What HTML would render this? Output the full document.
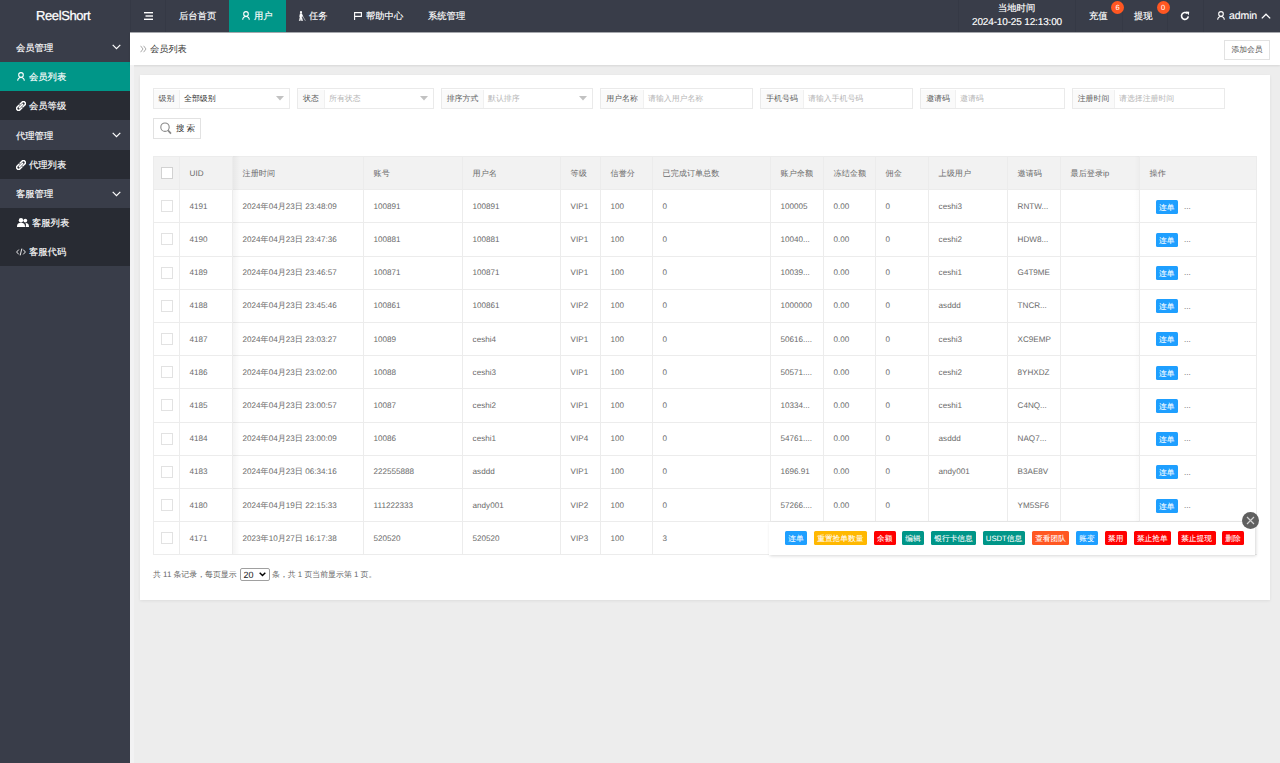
<!DOCTYPE html><html><head><meta charset="utf-8"><style>
*{margin:0;padding:0;box-sizing:border-box}
html,body{width:1280px;height:763px;overflow:hidden}
body{position:relative;background:#ededed;font-family:"Liberation Sans",sans-serif;text-rendering:geometricPrecision;color:#666}
.a{position:absolute;white-space:nowrap}
#hd{left:0;top:0;width:1280px;height:32px;background:#393D49}
#logo{left:36px;top:0;height:32px;line-height:31px;color:#fff;font-size:13px;letter-spacing:-0.4px;-webkit-text-stroke:0.35px rgba(255,255,255,.85)}
.nv{color:#fff;font-size:9.3px;line-height:33px;top:0;-webkit-text-stroke:0.2px rgba(255,255,255,.8)}
#side{left:0;top:32px;width:130px;height:731px;background:#393D49}

.sc{background:#282B33}
.act{background:#009688}
#bc{left:130px;top:32px;width:1150px;height:33px;background:#fff;box-shadow:0 1px 2px rgba(0,0,0,.1)}
#card{left:140px;top:75px;width:1130px;height:525px;background:#fff;box-shadow:0 1px 3px rgba(0,0,0,.07)}
.fi{height:20.5px;top:88px;border:1px solid #eaeaea;background:#fff}
.fl{position:absolute;left:0;top:1px;bottom:0;background:#fafafa;border-right:1px solid #f0f0f0;color:#5a5a5a;font-size:7.9px;line-height:18.5px;text-align:center}
.fv{position:absolute;top:1px;line-height:18.5px;font-size:7.9px;color:#aaa}
.ln{background:#ececec}
.tx{font-size:8.1px;color:#6a6a6a}
.btn{height:14px;line-height:15px;font-size:7.7px;color:#fff;text-align:center;border-radius:1.5px;-webkit-text-stroke:0.1px rgba(255,255,255,.6)}
</style></head><body>
<div class="a" id="hd"></div>
<div class="a" id="logo">ReelShort</div>
<div class="a" style="left:130px;top:0;width:1px;height:32px;background:#353945"></div>
<div class="a" style="left:165px;top:0;width:1px;height:32px;background:#353945"></div>
<svg class="a" style="left:144px;top:12px" width="9" height="8" viewBox="0 0 9 8"><rect x="0" y="0" width="9" height="1.4" fill="#fff"/><rect x="1.5" y="3.3" width="7.5" height="1.4" fill="#fff"/><rect x="0" y="6.6" width="9" height="1.4" fill="#fff"/></svg>
<div class="a nv" style="left:179px">后台首页</div>
<div class="a" style="left:229px;top:0;width:57px;height:32px;background:#009688"></div>
<svg class="a" style="left:242px;top:11px" width="8" height="9" viewBox="0 0 8 9"><circle cx="4" cy="2.9" r="2.3" fill="none" stroke="#fff" stroke-width="1.1"/><path d="M0.7 8.7 C0.9 6.4 2.3 5.5 4 5.5 C5.7 5.5 7.1 6.4 7.3 8.7" fill="none" stroke="#fff" stroke-width="1.1"/></svg>
<div class="a nv" style="left:254px">用户</div>
<svg class="a" style="left:298px;top:11px" width="8" height="10" viewBox="0 0 8 10"><circle cx="3" cy="1.2" r="1.1" fill="#fff"/><path d="M2.2 2.6 L3.8 2.6 L4.6 5.2 L3.9 5.4 L3.7 4.6 L3.8 6.4 L4.6 9.8 L3.6 9.8 L2.9 7 L2.2 9.8 L1.3 9.8 L2 6.2 L1.6 5.4 Z M4.2 4.2 L7.4 9.8" fill="#fff" stroke="#fff" stroke-width="0.5"/></svg>
<div class="a nv" style="left:309px">任务</div>
<svg class="a" style="left:354px;top:12px" width="8" height="8" viewBox="0 0 8 8"><path d="M0.6 0 L0.6 8 M0.6 0.6 L7.4 0.6 L7.4 4.4 L0.6 4.4" fill="none" stroke="#fff" stroke-width="1.1"/></svg>
<div class="a nv" style="left:366px">帮助中心</div>
<div class="a nv" style="left:428px">系统管理</div>
<div class="a" style="left:958px;top:0;width:1px;height:32px;background:#353945"></div>
<div class="a" style="left:1075px;top:0;width:1px;height:32px;background:#353945"></div>
<div class="a" style="left:1122px;top:0;width:1px;height:32px;background:#353945"></div>
<div class="a" style="left:1167px;top:0;width:1px;height:32px;background:#353945"></div>
<div class="a" style="left:1203px;top:0;width:1px;height:32px;background:#353945"></div>
<div class="a nv" style="left:998px;top:0;line-height:16px;color:#fff">当地时间</div>
<div class="a nv" style="left:972px;top:15px;line-height:16px;font-size:10px;letter-spacing:-0.15px">2024-10-25 12:13:00</div>
<div class="a nv" style="left:1089px;top:0">充值</div>
<div class="a" style="left:1111px;top:1px;width:13px;height:12.5px;border-radius:7px;background:#FF5722;color:#fff;font-size:7.5px;line-height:13px;text-align:center">6</div>
<div class="a nv" style="left:1134px;top:0">提现</div>
<div class="a" style="left:1156.5px;top:1px;width:13px;height:12.5px;border-radius:7px;background:#FF5722;color:#fff;font-size:7.5px;line-height:13px;text-align:center">0</div>
<svg class="a" style="left:1180px;top:11px" width="10" height="10" viewBox="0 0 10 10"><path d="M8.3 5.4 A3.4 3.4 0 1 1 7.2 2.4" fill="none" stroke="#fff" stroke-width="1.6"/><path d="M5.6 0.6 L9.2 0.8 L8.8 4.2 Z" fill="#fff"/></svg>
<svg class="a" style="left:1217px;top:11px" width="8" height="9" viewBox="0 0 8 9"><circle cx="4" cy="2.9" r="2.3" fill="none" stroke="#fff" stroke-width="1.1"/><path d="M0.7 8.7 C0.9 6.4 2.3 5.5 4 5.5 C5.7 5.5 7.1 6.4 7.3 8.7" fill="none" stroke="#fff" stroke-width="1.1"/></svg>
<div class="a nv" style="left:1229px;font-size:10.5px;letter-spacing:-0.1px">admin</div>
<svg class="a" style="left:1261px;top:13px" width="10" height="6" viewBox="0 0 10 6"><path d="M0.8 5.4 L5 1.2 L9.2 5.4" fill="none" stroke="#fff" stroke-width="1.3"/></svg>
<div class="a" id="side"></div>
<div class="a " style="left:0;top:32px;width:130px;height:30px"></div>
<div class="a nv" style="left:16px;top:33px;line-height:30px">会员管理</div>
<svg class="a" style="left:112px;top:44.0px" width="9" height="6" viewBox="0 0 9 6"><path d="M0.7 0.8 L4.5 4.6 L8.3 0.8" fill="none" stroke="#fff" stroke-width="1.2"/></svg>
<div class="a act" style="left:0;top:62px;width:130px;height:29px"></div>
<div class="a nv" style="left:29px;top:63px;line-height:29px">会员列表</div>
<div class="a sc" style="left:0;top:91px;width:130px;height:29px"></div>
<div class="a nv" style="left:29px;top:92px;line-height:29px">会员等级</div>
<div class="a " style="left:0;top:120px;width:130px;height:30px"></div>
<div class="a nv" style="left:16px;top:121px;line-height:30px">代理管理</div>
<svg class="a" style="left:112px;top:132.0px" width="9" height="6" viewBox="0 0 9 6"><path d="M0.7 0.8 L4.5 4.6 L8.3 0.8" fill="none" stroke="#fff" stroke-width="1.2"/></svg>
<div class="a sc" style="left:0;top:150px;width:130px;height:29px"></div>
<div class="a nv" style="left:29px;top:151px;line-height:29px">代理列表</div>
<div class="a " style="left:0;top:179px;width:130px;height:29.30000000000001px"></div>
<div class="a nv" style="left:16px;top:180px;line-height:29.30000000000001px">客服管理</div>
<svg class="a" style="left:112px;top:190.65px" width="9" height="6" viewBox="0 0 9 6"><path d="M0.7 0.8 L4.5 4.6 L8.3 0.8" fill="none" stroke="#fff" stroke-width="1.2"/></svg>
<div class="a sc" style="left:0;top:208.3px;width:130px;height:28.69999999999999px"></div>
<div class="a nv" style="left:32px;top:209.3px;line-height:28.69999999999999px">客服列表</div>
<div class="a sc" style="left:0;top:237px;width:130px;height:29px"></div>
<div class="a nv" style="left:29px;top:238px;line-height:29px">客服代码</div>
<svg class="a" style="left:17px;top:72px" width="8" height="9" viewBox="0 0 8 9"><circle cx="4" cy="2.9" r="2.3" fill="none" stroke="#fff" stroke-width="1.1"/><path d="M0.7 8.7 C0.9 6.4 2.3 5.5 4 5.5 C5.7 5.5 7.1 6.4 7.3 8.7" fill="none" stroke="#fff" stroke-width="1.1"/></svg>
<svg class="a" style="left:16px;top:101px" width="10" height="10" viewBox="0 0 10 10"><path d="M4.2 3 L6 1.2 A1.6 1.6 0 0 1 8.8 4 L7 5.8 M5.8 7 L4 8.8 A1.6 1.6 0 0 1 1.2 6 L3 4.2 M3.4 6.6 L6.6 3.4" fill="none" stroke="#fff" stroke-width="1.5" stroke-linecap="round"/></svg>
<svg class="a" style="left:16px;top:160px" width="10" height="10" viewBox="0 0 10 10"><path d="M4.2 3 L6 1.2 A1.6 1.6 0 0 1 8.8 4 L7 5.8 M5.8 7 L4 8.8 A1.6 1.6 0 0 1 1.2 6 L3 4.2 M3.4 6.6 L6.6 3.4" fill="none" stroke="#fff" stroke-width="1.5" stroke-linecap="round"/></svg>
<svg class="a" style="left:17px;top:218px" width="12" height="9" viewBox="0 0 12 9"><circle cx="4" cy="2.3" r="2.2" fill="#fff"/><path d="M0 9 C0 5.5 1.8 4.8 4 4.8 C6.2 4.8 8 5.5 8 9 Z" fill="#fff"/><circle cx="8.3" cy="2.6" r="1.9" fill="#fff"/><path d="M8.6 9 L12 9 C12 5.8 10.5 5 8.4 5 C9.2 6 9 7.5 8.6 9Z" fill="#fff"/></svg>
<svg class="a" style="left:16px;top:248px" width="10" height="8" viewBox="0 0 10 8"><path d="M2.8 1.6 L0.6 4 L2.8 6.4 M7.2 1.6 L9.4 4 L7.2 6.4 M5.8 0.6 L4.2 7.4" fill="none" stroke="#fff" stroke-width="0.9"/></svg>
<div class="a" id="bc"></div>
<div class="a" style="left:130px;top:65px;width:4px;height:698px;background:#f2f2f3"></div>
<div class="a" style="left:0;top:32px;width:1280px;height:1px;background:rgba(57,61,73,.45)"></div>
<svg class="a" style="left:140px;top:45px" width="7" height="8" viewBox="0 0 7 8"><path d="M0.6 0.8 L3 4 L0.6 7.2 M3.6 0.8 L6 4 L3.6 7.2" fill="none" stroke="#aaa" stroke-width="1"/></svg>
<div class="a tx" style="left:150px;top:41px;line-height:16px;color:#333;font-size:9.2px">会员列表</div>
<div class="a" style="left:1224px;top:39.5px;width:46px;height:20px;border:1px solid #e2e2e2;background:#fff;color:#555;font-size:7.8px;line-height:18px;text-align:center">添加会员</div>
<div class="a" id="card"></div>
<div class="a fi" style="left:153px;width:137px"><div class="fl" style="width:26px">级别</div><div class="fv" style="left:30px;color:#333">全部级别</div>
<svg style="position:absolute;left:122px;top:7px" width="8" height="5" viewBox="0 0 8 5"><path d="M0 0 L8 0 L4 4.5Z" fill="#c2c2c2"/></svg>
</div>
<div class="a fi" style="left:297px;width:137px"><div class="fl" style="width:27px">状态</div><div class="fv" style="left:31px;color:#b5b5b5">所有状态</div>
<svg style="position:absolute;left:122px;top:7px" width="8" height="5" viewBox="0 0 8 5"><path d="M0 0 L8 0 L4 4.5Z" fill="#c2c2c2"/></svg>
</div>
<div class="a fi" style="left:441px;width:152px"><div class="fl" style="width:42px">排序方式</div><div class="fv" style="left:46px;color:#b5b5b5">默认排序</div>
<svg style="position:absolute;left:137px;top:7px" width="8" height="5" viewBox="0 0 8 5"><path d="M0 0 L8 0 L4 4.5Z" fill="#c2c2c2"/></svg>
</div>
<div class="a fi" style="left:600px;width:153px"><div class="fl" style="width:43px">用户名称</div><div class="fv" style="left:47px;color:#b5b5b5">请输入用户名称</div>
</div>
<div class="a fi" style="left:760px;width:153px"><div class="fl" style="width:43px">手机号码</div><div class="fv" style="left:47px;color:#b5b5b5">请输入手机号码</div>
</div>
<div class="a fi" style="left:920px;width:145px"><div class="fl" style="width:35px">邀请码</div><div class="fv" style="left:39px;color:#b5b5b5">邀请码</div>
</div>
<div class="a fi" style="left:1072px;width:153px"><div class="fl" style="width:42px">注册时间</div><div class="fv" style="left:46px;color:#b5b5b5">请选择注册时间</div>
</div>
<div class="a" style="left:153px;top:118px;width:48px;height:21px;border:1px solid #e2e2e2;background:#fff"></div>
<svg class="a" style="left:160px;top:122px" width="12" height="13" viewBox="0 0 12 13"><circle cx="5" cy="5.2" r="4.2" fill="none" stroke="#888" stroke-width="1.1"/><path d="M8 8.4 L11 11.6" stroke="#888" stroke-width="1.6"/></svg>
<div class="a tx" style="left:176px;top:120px;line-height:17px;color:#333;font-size:8.5px;letter-spacing:2px">搜索</div>
<div class="a" style="left:153px;top:156px;width:1103px;height:33.150000000000006px;background:#f2f2f2"></div>
<div class="a ln" style="left:153px;top:156px;width:1104px;height:1px"></div>
<div class="a ln" style="left:153px;top:189.15px;width:1104px;height:1px"></div>
<div class="a ln" style="left:153px;top:222.36px;width:1104px;height:1px"></div>
<div class="a ln" style="left:153px;top:255.57px;width:1104px;height:1px"></div>
<div class="a ln" style="left:153px;top:288.78px;width:1104px;height:1px"></div>
<div class="a ln" style="left:153px;top:321.99px;width:1104px;height:1px"></div>
<div class="a ln" style="left:153px;top:355.20000000000005px;width:1104px;height:1px"></div>
<div class="a ln" style="left:153px;top:388.40999999999997px;width:1104px;height:1px"></div>
<div class="a ln" style="left:153px;top:421.62px;width:1104px;height:1px"></div>
<div class="a ln" style="left:153px;top:454.83000000000004px;width:1104px;height:1px"></div>
<div class="a ln" style="left:153px;top:488.03999999999996px;width:1104px;height:1px"></div>
<div class="a ln" style="left:153px;top:521.25px;width:1104px;height:1px"></div>
<div class="a ln" style="left:153px;top:554.46px;width:1104px;height:1px"></div>
<div class="a ln" style="left:153px;top:156px;width:1px;height:398.46000000000004px"></div>
<div class="a ln" style="left:179px;top:156px;width:1px;height:398.46000000000004px"></div>
<div class="a ln" style="left:232px;top:156px;width:1px;height:398.46000000000004px"></div>
<div class="a ln" style="left:363px;top:156px;width:1px;height:398.46000000000004px"></div>
<div class="a ln" style="left:462px;top:156px;width:1px;height:398.46000000000004px"></div>
<div class="a ln" style="left:560px;top:156px;width:1px;height:398.46000000000004px"></div>
<div class="a ln" style="left:600px;top:156px;width:1px;height:398.46000000000004px"></div>
<div class="a ln" style="left:652px;top:156px;width:1px;height:398.46000000000004px"></div>
<div class="a ln" style="left:770px;top:156px;width:1px;height:398.46000000000004px"></div>
<div class="a ln" style="left:823px;top:156px;width:1px;height:398.46000000000004px"></div>
<div class="a ln" style="left:875px;top:156px;width:1px;height:398.46000000000004px"></div>
<div class="a ln" style="left:928px;top:156px;width:1px;height:398.46000000000004px"></div>
<div class="a ln" style="left:1007px;top:156px;width:1px;height:398.46000000000004px"></div>
<div class="a ln" style="left:1060px;top:156px;width:1px;height:398.46000000000004px"></div>
<div class="a ln" style="left:1139px;top:156px;width:1px;height:398.46000000000004px"></div>
<div class="a ln" style="left:1256px;top:156px;width:1px;height:365.4px"></div>
<div class="a" style="left:233px;top:156px;width:7px;height:398.46000000000004px;background:linear-gradient(90deg,rgba(0,0,0,.045),rgba(0,0,0,0))"></div>
<div class="a" style="left:1134px;top:156px;width:5px;height:398.46000000000004px;background:linear-gradient(270deg,rgba(0,0,0,.02),rgba(0,0,0,0))"></div>
<div class="a tx" style="left:189.6px;top:157px;line-height:33.150000000000006px">UID</div>
<div class="a tx" style="left:242.6px;top:157px;line-height:33.150000000000006px">注册时间</div>
<div class="a tx" style="left:373.6px;top:157px;line-height:33.150000000000006px">账号</div>
<div class="a tx" style="left:472.6px;top:157px;line-height:33.150000000000006px">用户名</div>
<div class="a tx" style="left:570.6px;top:157px;line-height:33.150000000000006px">等级</div>
<div class="a tx" style="left:610.6px;top:157px;line-height:33.150000000000006px">信誉分</div>
<div class="a tx" style="left:662.6px;top:157px;line-height:33.150000000000006px">已完成订单总数</div>
<div class="a tx" style="left:780.6px;top:157px;line-height:33.150000000000006px">账户余额</div>
<div class="a tx" style="left:833.6px;top:157px;line-height:33.150000000000006px">冻结金额</div>
<div class="a tx" style="left:885.6px;top:157px;line-height:33.150000000000006px">佣金</div>
<div class="a tx" style="left:938.6px;top:157px;line-height:33.150000000000006px">上级用户</div>
<div class="a tx" style="left:1017.6px;top:157px;line-height:33.150000000000006px">邀请码</div>
<div class="a tx" style="left:1070.6px;top:157px;line-height:33.150000000000006px">最后登录ip</div>
<div class="a tx" style="left:1149.6px;top:157px;line-height:33.150000000000006px">操作</div>
<div class="a" style="left:161px;top:167px;width:12px;height:12px;border:1px solid #d2d2d2;background:#fff"></div>
<div class="a" style="left:161px;top:200.15px;width:12px;height:12px;border:1px solid #e2e2e2;background:#fff"></div>
<div class="a tx" style="left:189.6px;top:189.75px;line-height:33.21px;">4191</div>
<div class="a tx" style="left:242.6px;top:189.75px;line-height:33.21px;">2024年04月23日 23:48:09</div>
<div class="a tx" style="left:373.6px;top:189.75px;line-height:33.21px;">100891</div>
<div class="a tx" style="left:472.6px;top:189.75px;line-height:33.21px;">100891</div>
<div class="a tx" style="left:570.6px;top:189.75px;line-height:33.21px;">VIP1</div>
<div class="a tx" style="left:610.6px;top:189.75px;line-height:33.21px;">100</div>
<div class="a tx" style="left:662.6px;top:189.75px;line-height:33.21px;">0</div>
<div class="a tx" style="left:780.6px;top:189.75px;line-height:33.21px;">100005</div>
<div class="a tx" style="left:833.6px;top:189.75px;line-height:33.21px;">0.00</div>
<div class="a tx" style="left:885.6px;top:189.75px;line-height:33.21px;">0</div>
<div class="a tx" style="left:938.6px;top:189.75px;line-height:33.21px;">ceshi3</div>
<div class="a tx" style="left:1017.6px;top:189.75px;line-height:33.21px;">RNTW...</div>
<div class="a btn" style="left:1155.5px;top:199.65px;width:22.5px;background:#1E9FFF">连单</div>
<div class="a tx" style="left:1184px;top:190.95000000000002px;line-height:31.21px;font-size:8px">...</div>
<div class="a" style="left:161px;top:233.36px;width:12px;height:12px;border:1px solid #e2e2e2;background:#fff"></div>
<div class="a tx" style="left:189.6px;top:222.96px;line-height:33.21px;">4190</div>
<div class="a tx" style="left:242.6px;top:222.96px;line-height:33.21px;">2024年04月23日 23:47:36</div>
<div class="a tx" style="left:373.6px;top:222.96px;line-height:33.21px;">100881</div>
<div class="a tx" style="left:472.6px;top:222.96px;line-height:33.21px;">100881</div>
<div class="a tx" style="left:570.6px;top:222.96px;line-height:33.21px;">VIP1</div>
<div class="a tx" style="left:610.6px;top:222.96px;line-height:33.21px;">100</div>
<div class="a tx" style="left:662.6px;top:222.96px;line-height:33.21px;">0</div>
<div class="a tx" style="left:780.6px;top:222.96px;line-height:33.21px;">10040...</div>
<div class="a tx" style="left:833.6px;top:222.96px;line-height:33.21px;">0.00</div>
<div class="a tx" style="left:885.6px;top:222.96px;line-height:33.21px;">0</div>
<div class="a tx" style="left:938.6px;top:222.96px;line-height:33.21px;">ceshi2</div>
<div class="a tx" style="left:1017.6px;top:222.96px;line-height:33.21px;">HDW8...</div>
<div class="a btn" style="left:1155.5px;top:232.86px;width:22.5px;background:#1E9FFF">连单</div>
<div class="a tx" style="left:1184px;top:224.16000000000003px;line-height:31.21px;font-size:8px">...</div>
<div class="a" style="left:161px;top:266.57px;width:12px;height:12px;border:1px solid #e2e2e2;background:#fff"></div>
<div class="a tx" style="left:189.6px;top:256.17px;line-height:33.21px;">4189</div>
<div class="a tx" style="left:242.6px;top:256.17px;line-height:33.21px;">2024年04月23日 23:46:57</div>
<div class="a tx" style="left:373.6px;top:256.17px;line-height:33.21px;">100871</div>
<div class="a tx" style="left:472.6px;top:256.17px;line-height:33.21px;">100871</div>
<div class="a tx" style="left:570.6px;top:256.17px;line-height:33.21px;">VIP1</div>
<div class="a tx" style="left:610.6px;top:256.17px;line-height:33.21px;">100</div>
<div class="a tx" style="left:662.6px;top:256.17px;line-height:33.21px;">0</div>
<div class="a tx" style="left:780.6px;top:256.17px;line-height:33.21px;">10039...</div>
<div class="a tx" style="left:833.6px;top:256.17px;line-height:33.21px;">0.00</div>
<div class="a tx" style="left:885.6px;top:256.17px;line-height:33.21px;">0</div>
<div class="a tx" style="left:938.6px;top:256.17px;line-height:33.21px;">ceshi1</div>
<div class="a tx" style="left:1017.6px;top:256.17px;line-height:33.21px;">G4T9ME</div>
<div class="a btn" style="left:1155.5px;top:266.07px;width:22.5px;background:#1E9FFF">连单</div>
<div class="a tx" style="left:1184px;top:257.37px;line-height:31.21px;font-size:8px">...</div>
<div class="a" style="left:161px;top:299.78px;width:12px;height:12px;border:1px solid #e2e2e2;background:#fff"></div>
<div class="a tx" style="left:189.6px;top:289.38px;line-height:33.21px;">4188</div>
<div class="a tx" style="left:242.6px;top:289.38px;line-height:33.21px;">2024年04月23日 23:45:46</div>
<div class="a tx" style="left:373.6px;top:289.38px;line-height:33.21px;">100861</div>
<div class="a tx" style="left:472.6px;top:289.38px;line-height:33.21px;">100861</div>
<div class="a tx" style="left:570.6px;top:289.38px;line-height:33.21px;">VIP2</div>
<div class="a tx" style="left:610.6px;top:289.38px;line-height:33.21px;">100</div>
<div class="a tx" style="left:662.6px;top:289.38px;line-height:33.21px;">0</div>
<div class="a tx" style="left:780.6px;top:289.38px;line-height:33.21px;">1000000</div>
<div class="a tx" style="left:833.6px;top:289.38px;line-height:33.21px;">0.00</div>
<div class="a tx" style="left:885.6px;top:289.38px;line-height:33.21px;">0</div>
<div class="a tx" style="left:938.6px;top:289.38px;line-height:33.21px;">asddd</div>
<div class="a tx" style="left:1017.6px;top:289.38px;line-height:33.21px;">TNCR...</div>
<div class="a btn" style="left:1155.5px;top:299.28px;width:22.5px;background:#1E9FFF">连单</div>
<div class="a tx" style="left:1184px;top:290.58px;line-height:31.21px;font-size:8px">...</div>
<div class="a" style="left:161px;top:332.99px;width:12px;height:12px;border:1px solid #e2e2e2;background:#fff"></div>
<div class="a tx" style="left:189.6px;top:322.59000000000003px;line-height:33.21px;">4187</div>
<div class="a tx" style="left:242.6px;top:322.59000000000003px;line-height:33.21px;">2024年04月23日 23:03:27</div>
<div class="a tx" style="left:373.6px;top:322.59000000000003px;line-height:33.21px;">10089</div>
<div class="a tx" style="left:472.6px;top:322.59000000000003px;line-height:33.21px;">ceshi4</div>
<div class="a tx" style="left:570.6px;top:322.59000000000003px;line-height:33.21px;">VIP1</div>
<div class="a tx" style="left:610.6px;top:322.59000000000003px;line-height:33.21px;">100</div>
<div class="a tx" style="left:662.6px;top:322.59000000000003px;line-height:33.21px;">0</div>
<div class="a tx" style="left:780.6px;top:322.59000000000003px;line-height:33.21px;">50616....</div>
<div class="a tx" style="left:833.6px;top:322.59000000000003px;line-height:33.21px;">0.00</div>
<div class="a tx" style="left:885.6px;top:322.59000000000003px;line-height:33.21px;">0</div>
<div class="a tx" style="left:938.6px;top:322.59000000000003px;line-height:33.21px;">ceshi3</div>
<div class="a tx" style="left:1017.6px;top:322.59000000000003px;line-height:33.21px;">XC9EMP</div>
<div class="a btn" style="left:1155.5px;top:332.49px;width:22.5px;background:#1E9FFF">连单</div>
<div class="a tx" style="left:1184px;top:323.79px;line-height:31.21px;font-size:8px">...</div>
<div class="a" style="left:161px;top:366.20000000000005px;width:12px;height:12px;border:1px solid #e2e2e2;background:#fff"></div>
<div class="a tx" style="left:189.6px;top:355.80000000000007px;line-height:33.21px;">4186</div>
<div class="a tx" style="left:242.6px;top:355.80000000000007px;line-height:33.21px;">2024年04月23日 23:02:00</div>
<div class="a tx" style="left:373.6px;top:355.80000000000007px;line-height:33.21px;">10088</div>
<div class="a tx" style="left:472.6px;top:355.80000000000007px;line-height:33.21px;">ceshi3</div>
<div class="a tx" style="left:570.6px;top:355.80000000000007px;line-height:33.21px;">VIP1</div>
<div class="a tx" style="left:610.6px;top:355.80000000000007px;line-height:33.21px;">100</div>
<div class="a tx" style="left:662.6px;top:355.80000000000007px;line-height:33.21px;">0</div>
<div class="a tx" style="left:780.6px;top:355.80000000000007px;line-height:33.21px;">50571....</div>
<div class="a tx" style="left:833.6px;top:355.80000000000007px;line-height:33.21px;">0.00</div>
<div class="a tx" style="left:885.6px;top:355.80000000000007px;line-height:33.21px;">0</div>
<div class="a tx" style="left:938.6px;top:355.80000000000007px;line-height:33.21px;">ceshi2</div>
<div class="a tx" style="left:1017.6px;top:355.80000000000007px;line-height:33.21px;">8YHXDZ</div>
<div class="a btn" style="left:1155.5px;top:365.70000000000005px;width:22.5px;background:#1E9FFF">连单</div>
<div class="a tx" style="left:1184px;top:357.00000000000006px;line-height:31.21px;font-size:8px">...</div>
<div class="a" style="left:161px;top:399.40999999999997px;width:12px;height:12px;border:1px solid #e2e2e2;background:#fff"></div>
<div class="a tx" style="left:189.6px;top:389.01px;line-height:33.21px;">4185</div>
<div class="a tx" style="left:242.6px;top:389.01px;line-height:33.21px;">2024年04月23日 23:00:57</div>
<div class="a tx" style="left:373.6px;top:389.01px;line-height:33.21px;">10087</div>
<div class="a tx" style="left:472.6px;top:389.01px;line-height:33.21px;">ceshi2</div>
<div class="a tx" style="left:570.6px;top:389.01px;line-height:33.21px;">VIP1</div>
<div class="a tx" style="left:610.6px;top:389.01px;line-height:33.21px;">100</div>
<div class="a tx" style="left:662.6px;top:389.01px;line-height:33.21px;">0</div>
<div class="a tx" style="left:780.6px;top:389.01px;line-height:33.21px;">10334...</div>
<div class="a tx" style="left:833.6px;top:389.01px;line-height:33.21px;">0.00</div>
<div class="a tx" style="left:885.6px;top:389.01px;line-height:33.21px;">0</div>
<div class="a tx" style="left:938.6px;top:389.01px;line-height:33.21px;">ceshi1</div>
<div class="a tx" style="left:1017.6px;top:389.01px;line-height:33.21px;">C4NQ...</div>
<div class="a btn" style="left:1155.5px;top:398.90999999999997px;width:22.5px;background:#1E9FFF">连单</div>
<div class="a tx" style="left:1184px;top:390.21px;line-height:31.21px;font-size:8px">...</div>
<div class="a" style="left:161px;top:432.62px;width:12px;height:12px;border:1px solid #e2e2e2;background:#fff"></div>
<div class="a tx" style="left:189.6px;top:422.22px;line-height:33.21px;">4184</div>
<div class="a tx" style="left:242.6px;top:422.22px;line-height:33.21px;">2024年04月23日 23:00:09</div>
<div class="a tx" style="left:373.6px;top:422.22px;line-height:33.21px;">10086</div>
<div class="a tx" style="left:472.6px;top:422.22px;line-height:33.21px;">ceshi1</div>
<div class="a tx" style="left:570.6px;top:422.22px;line-height:33.21px;">VIP4</div>
<div class="a tx" style="left:610.6px;top:422.22px;line-height:33.21px;">100</div>
<div class="a tx" style="left:662.6px;top:422.22px;line-height:33.21px;">0</div>
<div class="a tx" style="left:780.6px;top:422.22px;line-height:33.21px;">54761....</div>
<div class="a tx" style="left:833.6px;top:422.22px;line-height:33.21px;">0.00</div>
<div class="a tx" style="left:885.6px;top:422.22px;line-height:33.21px;">0</div>
<div class="a tx" style="left:938.6px;top:422.22px;line-height:33.21px;">asddd</div>
<div class="a tx" style="left:1017.6px;top:422.22px;line-height:33.21px;">NAQ7...</div>
<div class="a btn" style="left:1155.5px;top:432.12px;width:22.5px;background:#1E9FFF">连单</div>
<div class="a tx" style="left:1184px;top:423.42px;line-height:31.21px;font-size:8px">...</div>
<div class="a" style="left:161px;top:465.83000000000004px;width:12px;height:12px;border:1px solid #e2e2e2;background:#fff"></div>
<div class="a tx" style="left:189.6px;top:455.43000000000006px;line-height:33.21px;">4183</div>
<div class="a tx" style="left:242.6px;top:455.43000000000006px;line-height:33.21px;">2024年04月23日 06:34:16</div>
<div class="a tx" style="left:373.6px;top:455.43000000000006px;line-height:33.21px;">222555888</div>
<div class="a tx" style="left:472.6px;top:455.43000000000006px;line-height:33.21px;">asddd</div>
<div class="a tx" style="left:570.6px;top:455.43000000000006px;line-height:33.21px;">VIP1</div>
<div class="a tx" style="left:610.6px;top:455.43000000000006px;line-height:33.21px;">100</div>
<div class="a tx" style="left:662.6px;top:455.43000000000006px;line-height:33.21px;">0</div>
<div class="a tx" style="left:780.6px;top:455.43000000000006px;line-height:33.21px;">1696.91</div>
<div class="a tx" style="left:833.6px;top:455.43000000000006px;line-height:33.21px;">0.00</div>
<div class="a tx" style="left:885.6px;top:455.43000000000006px;line-height:33.21px;">0</div>
<div class="a tx" style="left:938.6px;top:455.43000000000006px;line-height:33.21px;">andy001</div>
<div class="a tx" style="left:1017.6px;top:455.43000000000006px;line-height:33.21px;">B3AE8V</div>
<div class="a btn" style="left:1155.5px;top:465.33000000000004px;width:22.5px;background:#1E9FFF">连单</div>
<div class="a tx" style="left:1184px;top:456.63000000000005px;line-height:31.21px;font-size:8px">...</div>
<div class="a" style="left:161px;top:499.03999999999996px;width:12px;height:12px;border:1px solid #e2e2e2;background:#fff"></div>
<div class="a tx" style="left:189.6px;top:488.64px;line-height:33.21px;">4180</div>
<div class="a tx" style="left:242.6px;top:488.64px;line-height:33.21px;">2024年04月19日 22:15:33</div>
<div class="a tx" style="left:373.6px;top:488.64px;line-height:33.21px;">111222333</div>
<div class="a tx" style="left:472.6px;top:488.64px;line-height:33.21px;">andy001</div>
<div class="a tx" style="left:570.6px;top:488.64px;line-height:33.21px;">VIP2</div>
<div class="a tx" style="left:610.6px;top:488.64px;line-height:33.21px;">100</div>
<div class="a tx" style="left:662.6px;top:488.64px;line-height:33.21px;">0</div>
<div class="a tx" style="left:780.6px;top:488.64px;line-height:33.21px;">57266....</div>
<div class="a tx" style="left:833.6px;top:488.64px;line-height:33.21px;">0.00</div>
<div class="a tx" style="left:885.6px;top:488.64px;line-height:33.21px;">0</div>
<div class="a tx" style="left:1017.6px;top:488.64px;line-height:33.21px;">YM5SF6</div>
<div class="a btn" style="left:1155.5px;top:498.53999999999996px;width:22.5px;background:#1E9FFF">连单</div>
<div class="a tx" style="left:1184px;top:489.84px;line-height:31.21px;font-size:8px">...</div>
<div class="a" style="left:161px;top:532.25px;width:12px;height:12px;border:1px solid #e2e2e2;background:#fff"></div>
<div class="a tx" style="left:189.6px;top:521.85px;line-height:33.21px;">4171</div>
<div class="a tx" style="left:242.6px;top:521.85px;line-height:33.21px;">2023年10月27日 16:17:38</div>
<div class="a tx" style="left:373.6px;top:521.85px;line-height:33.21px;">520520</div>
<div class="a tx" style="left:472.6px;top:521.85px;line-height:33.21px;">520520</div>
<div class="a tx" style="left:570.6px;top:521.85px;line-height:33.21px;">VIP3</div>
<div class="a tx" style="left:610.6px;top:521.85px;line-height:33.21px;">100</div>
<div class="a tx" style="left:662.6px;top:521.85px;line-height:33.21px;">3</div>
<div class="a tx" style="left:153px;top:568px;line-height:14px;font-size:7.9px;color:#666">共 11 条记录，每页显示</div>
<div class="a" style="left:240px;top:567.5px;width:30px;height:13.5px;border:1px solid #a0a0a0;border-radius:2px;background:#fff;color:#222;font-size:9px;line-height:13px;padding-left:2.5px">20</div>
<svg class="a" style="left:259px;top:572px" width="7" height="5" viewBox="0 0 7 5"><path d="M0.7 0.7 L3.5 3.6 L6.3 0.7" fill="none" stroke="#000" stroke-width="1.4"/></svg>
<div class="a tx" style="left:272px;top:568px;line-height:14px;font-size:7.9px;color:#666">条，共 1 页当前显示第 1 页。</div>
<div class="a" style="left:768.5px;top:521.5px;width:486px;height:33.5px;background:#fff;box-shadow:1px 1px 3px rgba(0,0,0,.16)"></div>
<div class="a btn" style="left:785px;top:531.2px;width:22px;background:#1E9FFF">连单</div>
<div class="a btn" style="left:813.5px;top:531.2px;width:53.5px;background:#FFB800">重置抢单数量</div>
<div class="a btn" style="left:873.5px;top:531.2px;width:22.5px;background:#FF0000">余额</div>
<div class="a btn" style="left:902px;top:531.2px;width:22px;background:#009688">编辑</div>
<div class="a btn" style="left:931px;top:531.2px;width:45px;background:#009688">银行卡信息</div>
<div class="a btn" style="left:983px;top:531.2px;width:42px;background:#009688">USDT信息</div>
<div class="a btn" style="left:1032px;top:531.2px;width:37px;background:#FF5722">查看团队</div>
<div class="a btn" style="left:1076px;top:531.2px;width:22px;background:#1E9FFF">账变</div>
<div class="a btn" style="left:1104.5px;top:531.2px;width:22.5px;background:#FF0000">禁用</div>
<div class="a btn" style="left:1133.5px;top:531.2px;width:37.5px;background:#FF0000">禁止抢单</div>
<div class="a btn" style="left:1177.5px;top:531.2px;width:38.0px;background:#FF0000">禁止提现</div>
<div class="a btn" style="left:1222px;top:531.2px;width:22px;background:#FF0000">删除</div>
<div class="a" style="left:1241.5px;top:512.3px;width:17px;height:17px;border-radius:50%;background:#5f5f5f"></div>
<svg class="a" style="left:1245.5px;top:516.3px" width="9" height="9" viewBox="0 0 9 9"><path d="M1 1 L8 8 M8 1 L1 8" stroke="#d4d4d4" stroke-width="1.15"/></svg>
</body></html>
